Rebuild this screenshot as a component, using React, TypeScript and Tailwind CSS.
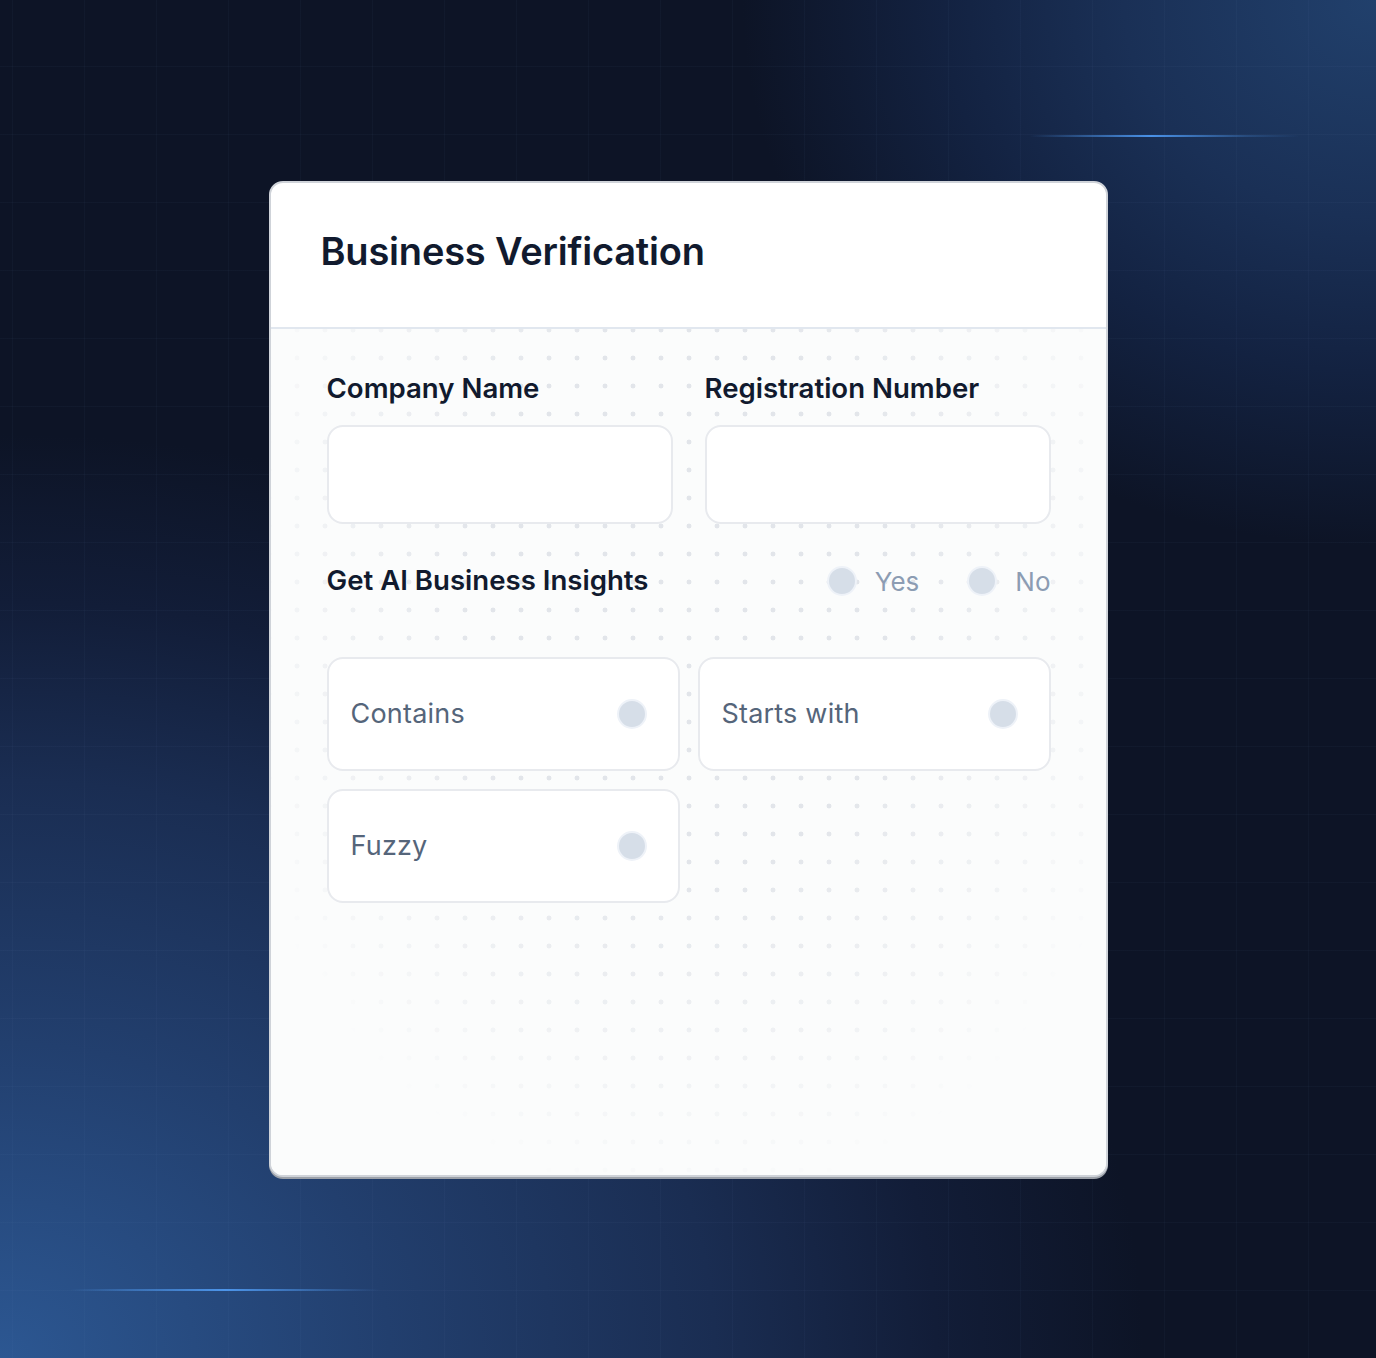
import React from "react";

function Radio() {
  return (
    <span className="block w-[30px] h-[30px] rounded-full bg-[#d6dee8] border-2 border-[#eef2f8] shrink-0" />
  );
}

function OptionCard({ label }: { label: string }) {
  return (
    <div className="h-[114px] rounded-2xl border-2 border-[#e8eaee] bg-white flex items-center justify-between pl-[22px] pr-[31px]">
      <span className="text-[27px] text-[#55657a] tracking-[0.2px]">{label}</span>
      <Radio />
    </div>
  );
}

export default function App() {
  return (
    <div className="relative w-[1376px] h-[1358px] overflow-hidden bg-[#0d1426] font-['Inter','Noto_Sans',sans-serif]">
      {/* background glows */}
      <div className="absolute inset-0 bg-[radial-gradient(ellipse_1300px_1050px_at_0%_100%,#2c5792_0%,#223f6e_30%,#1a2d52_55%,#121d38_72%,rgba(13,20,38,0)_88%),radial-gradient(ellipse_720px_620px_at_100%_0%,#21406c_0%,#1a3056_35%,#132241_60%,rgba(13,20,38,0)_88%)]" />
      {/* grid */}
      <div className="absolute inset-0 bg-[linear-gradient(to_right,rgba(120,150,200,0.045)_1px,transparent_1px),linear-gradient(to_bottom,rgba(120,150,200,0.045)_1px,transparent_1px)] bg-[length:72px_68px] bg-[position:12px_-2px]" />
      {/* light streaks */}
      <div className="absolute left-[1030px] top-[135px] w-[270px] h-[2px] bg-[linear-gradient(to_right,rgba(74,144,226,0)_0%,#4a92e8_45%,rgba(74,144,226,0.25)_80%,rgba(74,144,226,0)_100%)]" />
      <div className="absolute left-[70px] top-[1289px] w-[310px] h-[2px] bg-[linear-gradient(to_right,rgba(74,144,226,0)_0%,rgba(74,144,226,0.5)_20%,#4d95ea_50%,rgba(74,144,226,0.4)_80%,rgba(74,144,226,0)_100%)]" />

      <div className="relative flex justify-center pt-[181px]">
        <div className="w-[839px] h-[996px] rounded-[14px] border-2 border-[#cfd3d9] bg-white shadow-[0_2px_0_0_#9ca1a9] overflow-hidden flex flex-col">
          <div className="h-[146px] shrink-0 flex items-center pl-[50px] pb-[8px] border-b-2 border-[#e1e7ef]">
            <h1 className="text-[38px] font-semibold text-[#111a2e] tracking-[-0.2px] leading-none">
              Business Verification
            </h1>
          </div>
          <div className="relative flex-1 bg-[#fbfcfc]">
            <div className="absolute inset-0 bg-[radial-gradient(circle,#e2e5ea_2.2px,transparent_2.7px)] bg-[length:28px_28px] bg-[position:12px_15px] [mask-image:radial-gradient(ellipse_58%_72%_at_50%_32%,#000_45%,transparent_100%)]" />
            <div className="relative pl-[56px] pr-[55px] pt-[43px]">
              <div className="grid grid-cols-2 gap-x-[32px]">
                <div className="flex flex-col">
                  <label className="h-[34px] flex items-center text-[27.6px] font-semibold text-[#111a2e]">
                    Company Name
                  </label>
                  <div className="mt-[19px] h-[99px] rounded-2xl border-2 border-[#e8eaee] bg-white" />
                </div>
                <div className="flex flex-col">
                  <label className="h-[34px] flex items-center text-[27.6px] font-semibold text-[#111a2e]">
                    Registration Number
                  </label>
                  <div className="mt-[19px] h-[99px] rounded-2xl border-2 border-[#e8eaee] bg-white" />
                </div>
              </div>

              <div className="mt-[40px] h-[34px] flex items-center justify-between">
                <span className="text-[27.6px] font-semibold text-[#111a2e]">Get AI Business Insights</span>
                <div className="flex items-center">
                  <Radio />
                  <span className="ml-[18px] text-[26px] text-[#8c9cb3]">Yes</span>
                  <span className="ml-[48px]"><Radio /></span>
                  <span className="ml-[18px] text-[26px] text-[#8c9cb3]">No</span>
                </div>
              </div>

              <div className="mt-[59px] grid grid-cols-2 gap-x-[18px] gap-y-[18px]">
                <OptionCard label="Contains" />
                <OptionCard label="Starts with" />
                <OptionCard label="Fuzzy" />
              </div>
            </div>
          </div>
        </div>
      </div>
    </div>
  );
}
